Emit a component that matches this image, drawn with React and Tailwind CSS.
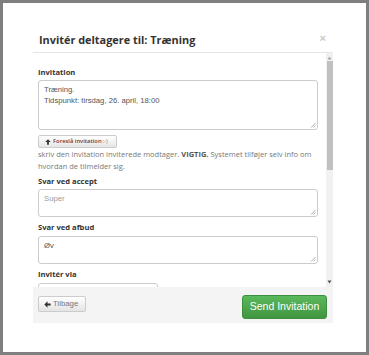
import React from 'react'

const sans = { fontFamily: '"Open Sans", "Liberation Sans", sans-serif' }
const arial = { fontFamily: '"Liberation Sans", Arial, sans-serif' }

const Label = ({ children, className = '' }) => (
  <div className={`text-[7.6px] leading-[12px] font-bold text-[#333] ${className}`} style={sans}>
    {children}
  </div>
)

const TextBox = ({ h, lines, muted, className = '' }) => (
  <div
    className={`relative rounded-[3px] border border-[#ccc] bg-white px-[5px] pt-[3px] text-[7.7px] leading-[11px] ${muted ? 'text-[#999]' : 'text-[#555]'} ${className}`}
    style={{ ...arial, height: h }}
  >
    {lines.map((l, i) => (
      <div key={i}>{l}</div>
    ))}
    {/* resize grip */}
    <svg className="absolute right-[1px] bottom-[1px]" width="6" height="6" viewBox="0 0 6 6">
      <path d="M5.5 1 L1 5.5 M5.5 3.5 L3.5 5.5" stroke="#999" strokeWidth="0.8" />
    </svg>
  </div>
)

export default function App() {
  return (
    <div className="w-[369px] h-[355px] border-[3px] border-[#7f7f7f] bg-white overflow-hidden">
      <div className="ml-[30px] mt-[25px] w-[300px]">
        {/* header */}
        <div className="flex items-center justify-between h-[25px] pl-[6px] pr-[7px] border-b border-[#e5e5e5]">
          <div className="text-[10.9px] font-bold text-[#333] leading-none" style={sans}>
            Invitér deltagere til: Træning
          </div>
          <div className="text-[11px] font-bold text-[#c8c8c8] leading-none -mt-[4px]" style={arial}>×</div>
        </div>

        {/* body */}
        <div className="flex h-[234px]">
          <div className="flex-1 overflow-hidden pl-[5px] pr-[8px] pt-[13px]">
            <Label>Invitation</Label>
            <TextBox h={50} className="mt-[2px]" lines={['Træning.', 'Tidspunkt: tirsdag, 26. april, 18:00']} />
            <div
              className="mt-[5px] flex w-[79px] items-center gap-[2px] h-[13px] pl-[6px] rounded-[2px] border border-[#ccc] bg-gradient-to-b from-white to-[#e6e6e6] text-[5.8px] font-semibold leading-none whitespace-nowrap"
              style={sans}
            >
              <svg width="6" height="6" viewBox="0 0 10 10">
                <path d="M5 0.5 L9.5 5 L6.5 5 L6.5 9.5 L3.5 9.5 L3.5 5 L0.5 5 Z" fill="#333" />
              </svg>
              <span className="text-[#7a3434]">Foreslå invitation</span>
              <span className="text-[#888] font-normal -ml-[1px]">;-)</span>
            </div>
            <div className="text-[7.5px] leading-[12px] text-[#777] whitespace-nowrap" style={sans}>
              <div>
                skriv den invitation inviterede modtager. <b className="text-[#555]">VIGTIG.</b> Systemet tilføjer selv info om
              </div>
              <div>hvordan de tilmelder sig.</div>
            </div>
            <Label className="mt-[3px]">Svar ved accept</Label>
            <TextBox h={28} muted className="mt-[2px]" lines={['Super']} />
            <Label className="mt-[4px]">Svar ved afbud</Label>
            <TextBox h={28} className="mt-[3px]" lines={['Øv']} />
            <Label className="mt-[4px]">Invitér via</Label>
            <div className="mt-[3px] w-[120px] h-[20px] rounded-[3px] border border-[#ccc] bg-white" />
          </div>

          {/* scrollbar */}
          <div className="w-[7px] bg-[#f1f1f1] flex flex-col items-center">
            <svg className="mt-[3px]" width="5" height="4" viewBox="0 0 5 4">
              <path d="M2.5 0.5 L4.5 3.5 L0.5 3.5 Z" fill="#a3a3a3" />
            </svg>
            <div className="mt-[1px] w-[6px] h-[109px] bg-[#c1c1c1]" />
            <div className="flex-1" />
            <svg className="mb-[3px]" width="5" height="4" viewBox="0 0 5 4">
              <path d="M0.5 0.5 L4.5 0.5 L2.5 3.5 Z" fill="#505050" />
            </svg>
          </div>
        </div>

        {/* footer */}
        <div className="flex items-start justify-between h-[36px] bg-[#f4f4f4] pl-[5px] pr-[6px] pt-[8px]">
          <div
            className="mt-[1px] flex items-center gap-[2px] h-[16px] w-[48px] pl-[5px] rounded-[2px] border border-[#ccc] bg-gradient-to-b from-white to-[#e4e4e4] text-[7.8px] text-[#777]"
            style={arial}
          >
            <svg width="7" height="7" viewBox="0 0 10 10">
              <path d="M0.5 5 L5 0.5 L5 3.5 L9.5 3.5 L9.5 6.5 L5 6.5 L5 9.5 Z" fill="#333" />
            </svg>
            Tilbage
          </div>
          <div
            className="flex items-center justify-center h-[24px] w-[85px] rounded-[3px] border border-[#3e8f3e] bg-gradient-to-b from-[#5cb85c] to-[#419641] text-white text-[10.5px]"
            style={arial}
          >
            Send Invitation
          </div>
        </div>
      </div>
    </div>
  )
}
